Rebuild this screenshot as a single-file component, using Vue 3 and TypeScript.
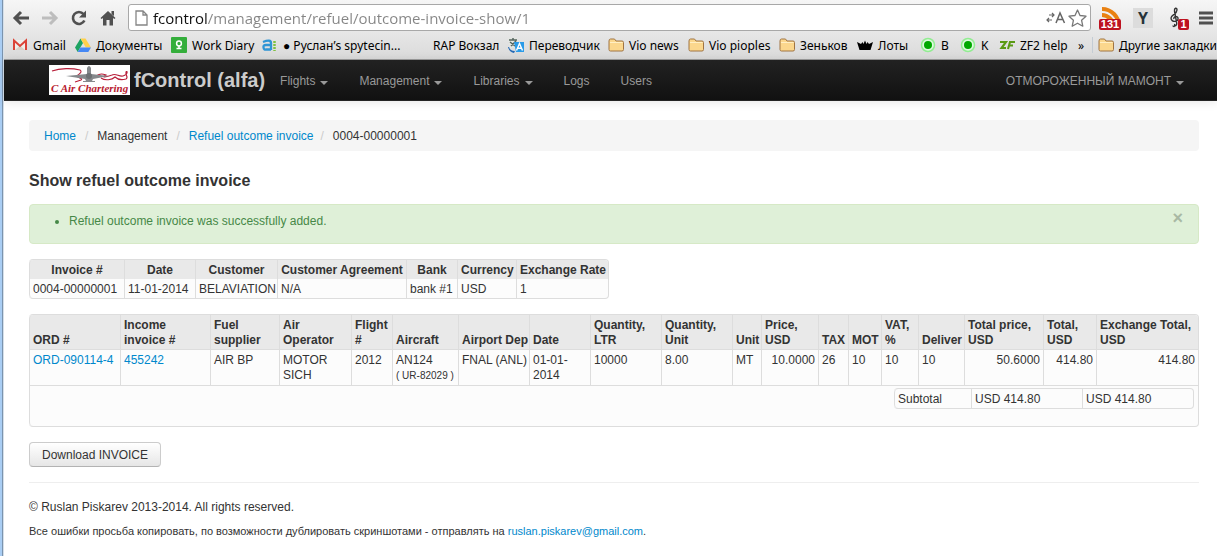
<script setup lang="ts">
interface Bookmark {
  icon: string
  label: string
  width: number
}
interface Column {
  label: string
  width: number
}

const url = 'fcontrol/management/refuel/outcome-invoice-show/1'

const bookmarks: Bookmark[] = [
  { icon: 'gmail', label: 'Gmail', width: 63 },
  { icon: 'drive', label: 'Документы', width: 96 },
  { icon: 'diary', label: 'Work Diary', width: 91 },
  { icon: 'ai', label: '● Руслан’s spytecin...', width: 150 },
  { icon: 'blank', label: 'RAP Вокзал', width: 96 },
  { icon: 'translate', label: 'Переводчик', width: 100 },
  { icon: 'folder', label: 'Vio news', width: 80 },
  { icon: 'folder', label: 'Vio pioples', width: 91 },
  { icon: 'folder', label: 'Зеньков', width: 78 },
  { icon: 'crown', label: 'Лоты', width: 63 },
  { icon: 'dot', label: 'B', width: 40 },
  { icon: 'dot', label: 'K', width: 39 },
  { icon: 'zf', label: 'ZF2 help', width: 77 },
]

const menu = [
  { label: 'Flights', caret: true },
  { label: 'Management', caret: true },
  { label: 'Libraries', caret: true },
  { label: 'Logs', caret: false },
  { label: 'Users', caret: false },
]

const invoiceColumns: Column[] = [
  { label: 'Invoice #', width: 95 },
  { label: 'Date', width: 71 },
  { label: 'Customer', width: 82 },
  { label: 'Customer Agreement', width: 129 },
  { label: 'Bank', width: 51 },
  { label: 'Currency', width: 59 },
  { label: 'Exchange Rate', width: 92 },
]
const invoice = ['0004-00000001', '11-01-2014', 'BELAVIATION', 'N/A', 'bank #1', 'USD', '1']

const orderColumns: Column[] = [
  { label: 'ORD #', width: 91 },
  { label: 'Income\ninvoice #', width: 90 },
  { label: 'Fuel\nsupplier', width: 69 },
  { label: 'Air\nOperator', width: 72 },
  { label: 'Flight\n#', width: 41 },
  { label: 'Aircraft', width: 66 },
  { label: 'Airport Dep', width: 71 },
  { label: 'Date', width: 61 },
  { label: 'Quantity,\nLTR', width: 71 },
  { label: 'Quantity,\nUnit', width: 71 },
  { label: 'Unit', width: 29 },
  { label: 'Price,\nUSD', width: 57 },
  { label: 'TAX', width: 30 },
  { label: 'MOT', width: 33 },
  { label: 'VAT,\n%', width: 37 },
  { label: 'Deliver', width: 46 },
  { label: 'Total price,\nUSD', width: 79 },
  { label: 'Total,\nUSD', width: 53 },
  { label: 'Exchange Total,\nUSD', width: 102 },
]
const subtotalColumns = [77, 111, 111]
</script>

<template>
  <div class="window">
    <header class="chrome">
      <div class="toolbar">
        <button class="tool" type="button" aria-label="Back">
          <svg width="18" height="16" viewBox="0 0 18 16"><path d="M9 2 3 8l6 6M3 8h14" fill="none" stroke="#505050" stroke-width="3" /></svg>
        </button>
        <button class="tool" type="button" aria-label="Forward">
          <svg width="18" height="16" viewBox="0 0 18 16"><path d="M9 2l6 6-6 6M15 8H1" fill="none" stroke="#bdbdbd" stroke-width="3" /></svg>
        </button>
        <button class="tool" type="button" aria-label="Reload">
          <svg width="18" height="16" viewBox="0 0 18 16"><path d="M13.5 4A6 6 0 1 0 14.4 10.5" fill="none" stroke="#505050" stroke-width="2.6" /><path d="M16 .5v7H9z" fill="#505050" /></svg>
        </button>
        <button class="tool" type="button" aria-label="Home page">
          <svg width="18" height="16" viewBox="0 0 18 16"><path d="M1.5 8 9 1l7.5 7-1.2 1L14 8v7.500h-3.500V10h-3v5.500H4V8L2.700 9zM12.500 1H15v5l-2.500-2z" fill="#505050" /></svg>
        </button>
        <div class="omnibox">
          <svg class="page" width="13" height="16" viewBox="0 0 13 16"><path d="M1 1h7l4 4v10H1zM8 1v4h4" fill="#fff" stroke="#858585" stroke-width="1.3" /></svg>
          <input class="address" type="text" aria-label="Address" :value="url" />
          <button class="mini" type="button" aria-label="Translate page">
            <svg width="20" height="16" viewBox="0 0 20 16"><path d="M3 5h5M6 3l2 2-2 2M6 10H1M3 8l-2 2 2 2" fill="none" stroke="#666" stroke-width="1.2" /><path d="m10 13 4-10 4.500 10M11.500 9.500h5.500" fill="none" stroke="#666" stroke-width="1.5" /></svg>
          </button>
          <button class="mini" type="button" aria-label="Bookmark this page">
            <svg width="19" height="18" viewBox="0 0 19 18"><path d="m9.500 1 2.500 5.500 6 .7-4.400 4.100 1.200 5.900-5.300-3-5.300 3 1.200-5.900L1 7.200l6-.7z" fill="#fff" stroke="#777" stroke-width="1.3" stroke-linejoin="round" /></svg>
          </button>
        </div>
        <div class="extensions">
          <button class="tool ext" type="button" aria-label="Feed reader, 131 unread">
            <svg width="24" height="24" viewBox="0 0 24 24"><path d="M3 3a17 17 0 0 1 17 17M3 9a11 11 0 0 1 11 11" fill="none" stroke="#e98112" stroke-width="4" /><circle cx="5" cy="16" r="3" fill="#e98112" /></svg>
            <span class="badge">131</span>
          </button>
          <button class="tool ext letter" type="button" aria-label="Y">Y</button>
          <button class="tool ext" type="button" aria-label="Music, 1 new">
            <svg width="24" height="24" viewBox="0 0 24 24"><path d="M9 20c3 0 3-2 2.500-4L9.500 5C9 2 12 1 12 4c0 4-6 5-6 8 0 5 8 4 7 0-1-3-5-1-4 1M8 19.500a1 1 0 1 0 1-1" fill="none" stroke="#333" stroke-width="1.4" /></svg>
            <span class="badge one">1</span>
          </button>
          <button class="tool bars" type="button" aria-label="Browser menu">
            <svg width="14" height="14" viewBox="0 0 14 14"><path d="M0 2h14M0 7h14M0 12h14" stroke="#505050" stroke-width="3" /></svg>
          </button>
        </div>
      </div>

      <nav class="bookmarks" aria-label="Bookmarks">
        <a v-for="(mark, i) in bookmarks" :key="i" class="bookmark" href="#" :style="{ width: mark.width + 'px' }">
          <svg class="favicon" width="16" height="16" viewBox="0 0 16 16" aria-hidden="true">
            <g v-if="mark.icon === 'gmail'">
              <path d="M1 3h14v10H1z" fill="#efefeb" /><path d="m3 13 5-4.500L13 13z" fill="#d8d3c7" />
              <path d="M2 13V3.500L8 9l6-5.500V13" fill="none" stroke="#db4437" stroke-width="2" />
            </g>
            <g v-else-if="mark.icon === 'drive'">
              <path d="M5.500 1.500 0 10.500l2.700 4.500L8 6z" fill="#1da362" /><path d="M5.500 1.500h5L16 10.500h-5.200z" fill="#ffd04b" /><path d="M5.400 10.500H16L13.300 15H2.700z" fill="#4688f4" />
            </g>
            <g v-else-if="mark.icon === 'diary'">
              <rect width="16" height="16" rx="1" fill="#34ae3b" /><circle cx="8" cy="6.500" r="2.400" fill="none" stroke="#fff" stroke-width="1.5" /><path d="M5.500 11.500h5M8 9v2" stroke="#fff" stroke-width="1.5" />
            </g>
            <g v-else-if="mark.icon === 'ai'">
              <path d="M1 5q8-3 8 1v7M9 8H4q-3 0-2.500 2.500T4 12.500h5" fill="none" stroke="#2f95d5" stroke-width="2.3" /><path d="M12.500 4v10" stroke="#7fc241" stroke-width="2.5" stroke-dasharray="2 1" />
            </g>
            <g v-else-if="mark.icon === 'translate'">
              <path d="M0 1h9l2 10H2z" fill="#e4e6e2" /><path d="M1 3h8M5 1v2M2 5l5 4M8 4 3 9" stroke="#54645e" stroke-width="1.5" /><path d="M6 5h10v10H8z" fill="#2a9be8" /><path d="M1 10q1 4 6 4l-1 2q-5-1-6-6" fill="#2368b5" /><path d="m8.500 13.500 3-7 3 7M9.500 11.300h4" fill="none" stroke="#fff" stroke-width="1.4" />
            </g>
            <g v-else-if="mark.icon === 'folder'">
              <path d="M1 4q0-2 1.500-2h4L8 4h6q1.500 0 1.500 1.500v7q0 1.500-1.500 1.500H2.500Q1 14 1 12.500z" fill="#fbd78d" stroke="#a07443" /><path d="M2 5.500h12.500" stroke="#ffefc4" />
            </g>
            <g v-else-if="mark.icon === 'crown'">
              <path d="m0 5 4 2 1.500-2 1 2L8 3.500 9.500 7l1-2L12 7l4-2-2.500 8h-11z" fill="#000" />
            </g>
            <g v-else-if="mark.icon === 'dot'">
              <circle cx="8" cy="8" r="6.500" fill="#dff9df" stroke="#92ec92" stroke-width="1.5" /><circle cx="8" cy="8" r="4" fill="#00a800" />
            </g>
            <g v-else-if="mark.icon === 'zf'">
              <path d="M1 5h6l-4.500 6H7M9 12l2-7h5M10 8.500h4" fill="none" stroke="#5a9a14" stroke-width="2.1" />
            </g>
          </svg>
          <span>{{ mark.label }}</span>
        </a>
        <button class="more" type="button" aria-label="More bookmarks">»</button>
        <a class="bookmark other" href="#">
          <svg class="favicon" width="16" height="16" viewBox="0 0 16 16" aria-hidden="true">
            <path d="M1 4q0-2 1.500-2h4L8 4h6q1.500 0 1.500 1.500v7q0 1.500-1.500 1.500H2.500Q1 14 1 12.500z" fill="#fbd78d" stroke="#a07443" /><path d="M2 5.500h12.500" stroke="#ffefc4" />
          </svg>
          <span>Другие закладки</span>
        </a>
      </nav>
    </header>

    <nav class="navbar" aria-label="Main">
      <a class="brand" href="#">
        <svg class="logo" width="81" height="30" viewBox="0 0 81 30" aria-label="C Air Chartering">
          <rect width="81" height="30" fill="#fff" />
          <path d="M3 6c8-3 20-3 28-1 3 2-1 4-2 5-3 3 6 3 3 5l-6 2M47 11c5-3 7-2 10-1-6 3 1 2 6 0 4-2 7 2 11 1 6-2 4-6 3-4-1 3 3 5 0 7-4 1-8 1-11-2-3 3-10 4-14 1" fill="none" stroke="#b81f3a" stroke-width="1.1" />
          <path d="M38 3q2-4 4 0v6l18 2-16 3-1 2h3v1H34v-1h3l-1-2-19-3 21-2z" fill="#85898c" /><circle cx="40" cy="11" r="3" fill="#6c7073" />
          <text x="2" y="27" font-family="Liberation Serif, serif" font-size="11" font-style="italic" fill="#b8202f">C Air Chartering</text>
        </svg>
        <span>fControl (alfa)</span>
      </a>
      <ul class="menu">
        <li v-for="item in menu" :key="item.label">
          <a href="#">{{ item.label }}<i v-if="item.caret" class="caret"></i></a>
        </li>
      </ul>
      <a class="account" href="#">ОТМОРОЖЕННЫЙ МАМОНТ<i class="caret"></i></a>
    </nav>

    <main class="content">
      <ol class="breadcrumb">
        <li><a href="#">Home</a><span class="divider">/</span></li>
        <li>Management<span class="divider">/</span></li>
        <li><a href="#">Refuel outcome invoice</a><span class="divider tight">/</span></li>
        <li>0004-00000001</li>
      </ol>

      <h1>Show refuel outcome invoice</h1>

      <div class="alert" role="status">
        <ul><li>Refuel outcome invoice was successfully added.</li></ul>
        <button class="close" type="button" aria-label="Close">×</button>
      </div>

      <table class="grid invoice">
        <colgroup><col v-for="c in invoiceColumns" :key="c.label" :style="{ width: c.width + 'px' }" /></colgroup>
        <thead>
          <tr><th v-for="c in invoiceColumns" :key="c.label" scope="col">{{ c.label }}</th></tr>
        </thead>
        <tbody>
          <tr><td v-for="value in invoice" :key="value">{{ value }}</td></tr>
        </tbody>
      </table>

      <table class="grid orders">
        <colgroup><col v-for="c in orderColumns" :key="c.label" :style="{ width: c.width + 'px' }" /></colgroup>
        <thead>
          <tr><th v-for="c in orderColumns" :key="c.label" scope="col">{{ c.label }}</th></tr>
        </thead>
        <tbody>
          <tr class="order">
            <td><a href="#">ORD-090114-4</a></td>
            <td><a href="#">455242</a></td>
            <td>AIR BP</td>
            <td>MOTOR<br />SICH</td>
            <td>2012</td>
            <td>AN124<br /><small>( UR-82029 )</small></td>
            <td>FNAL (ANL)</td>
            <td>01-01-<br />2014</td>
            <td>10000</td>
            <td>8.00</td>
            <td>MT</td>
            <td class="num">10.0000</td>
            <td>26</td>
            <td>10</td>
            <td>10</td>
            <td>10</td>
            <td class="num">50.6000</td>
            <td class="num">414.80</td>
            <td class="num">414.80</td>
          </tr>
          <tr class="sum">
            <td :colspan="orderColumns.length">
              <table class="grid subtotal">
                <colgroup><col v-for="(w, i) in subtotalColumns" :key="i" :style="{ width: w + 'px' }" /></colgroup>
                <tbody>
                  <tr><td>Subtotal</td><td>USD 414.80</td><td>USD 414.80</td></tr>
                </tbody>
              </table>
            </td>
          </tr>
        </tbody>
      </table>

      <button class="download" type="button">Download INVOICE</button>

      <footer>
        <p>© Ruslan Piskarev 2013-2014. All rights reserved.</p>
        <p class="note">Все ошибки просьба копировать, по возможности дублировать скриншотами - отправлять на <a href="#">ruslan.piskarev@gmail.com</a>.</p>
      </footer>
    </main>
  </div>
</template>

<style>
body {
  margin: 0;
  background: #fff;
}
</style>

<style scoped>
* {
  box-sizing: border-box;
}
.window {
  min-height: 100vh;
  padding-left: 4px;
  background: linear-gradient(90deg, #a9cdf3 0 2px, #7b93ad 2px 3px, #d5e0ea 3px 4px, #fff 4px);
  overflow: hidden;
  font: 12px/15px "Liberation Sans", Arial, sans-serif;
  color: #333;
}
a {
  color: #08c;
  text-decoration: none;
}
button {
  font: inherit;
  cursor: pointer;
}
ul,
ol {
  margin: 0;
  padding: 0;
  list-style: none;
}

.chrome {
  height: 60px;
  border-bottom: 1px solid #9c9c9c;
  background: linear-gradient(#f6f6f6, #dadada);
  font-family: "Noto Sans", "Open Sans", sans-serif;
  color: #000;
}
.toolbar {
  display: flex;
  align-items: center;
  height: 35px;
  padding: 0 4px 0 8px;
}
.tool {
  display: flex;
  justify-content: center;
  align-items: center;
  flex: none;
  width: 29px;
  height: 24px;
  padding: 0 11px 0 0;
  border: 0;
  background: none;
}
.tool svg,
.mini svg,
.page {
  flex: none;
}
.omnibox {
  display: flex;
  align-items: center;
  flex: 1;
  min-width: 0;
  height: 27px;
  padding: 0 3px 0 6px;
  border: 1px solid #a8a8a8;
  border-radius: 3px;
  background: #fff;
}
.address {
  flex: 1;
  min-width: 0;
  height: 24px;
  margin: 0 0 0 5px;
  padding: 0;
  border: 0;
  outline: 0;
  font: 15px/24px "Open Sans", "Noto Sans", sans-serif;
  color: transparent;
  background: linear-gradient(90deg, #111 55px, #858585 55px);
  background-clip: text;
}
.mini {
  display: flex;
  margin: 0 0 0 2px;
  padding: 0;
  border: 0;
  background: none;
}
.extensions {
  display: flex;
  align-items: center;
  gap: 10px;
  margin-left: 8px;
}
.ext {
  position: relative;
  width: 24px;
  padding: 0;
}
.badge {
  position: absolute;
  left: 0;
  bottom: 0;
  width: 22px;
  border-radius: 2px;
  background: #bd1220;
  color: #fff;
  font: bold 11px/11px "Liberation Sans", Arial, sans-serif;
}
.badge.one {
  left: 13px;
  width: 11px;
}
.letter {
  width: 20px;
  height: 20px;
  margin: 0 2px 0 0;
  background: #dcdcdc;
  color: #263238;
  font: bold 16px/20px "Open Sans", sans-serif;
}
.bars {
  width: 14px;
  padding: 0;
}
.bookmarks {
  display: flex;
  align-items: center;
  height: 20px;
  padding-left: 8px;
}
.bookmark {
  display: flex;
  align-items: center;
  gap: 5px;
  flex: none;
  color: #000;
  font-size: 12px;
  white-space: nowrap;
}
.favicon {
  flex: none;
}
.more {
  width: 17px;
  padding: 0 6px 0 0;
  border: 0;
  background: none;
}
.other {
  padding-left: 5px;
  border-left: 1px solid #c4ccd4;
}

.navbar {
  display: flex;
  align-items: center;
  height: 41px;
  padding: 0 29px 0 45px;
  border-bottom: 1px solid #252525;
  background: linear-gradient(#222, #111);
  box-shadow: 0 1px 10px rgba(0, 0, 0, 0.1);
}
.brand {
  display: flex;
  align-items: center;
  gap: 4px;
  color: #ccc;
  font-size: 20px;
  font-weight: bold;
  line-height: 20px;
  white-space: nowrap;
}
.menu {
  display: flex;
}
.menu a,
.account {
  display: flex;
  align-items: center;
  padding: 2px 16px 0 15px;
  color: #999;
  line-height: 20px;
  white-space: nowrap;
}
.account {
  margin-left: auto;
  padding: 2px 4px 0;
}
.caret {
  margin: 4px 0 0 5px;
  border: 4px solid transparent;
  border-top-color: #999;
  border-bottom: 0;
}

.content {
  padding: 19px 18px 0 25px;
}
.breadcrumb {
  display: flex;
  padding: 9px 15px 7px;
  border-radius: 4px;
  background: #f5f5f5;
}
.divider {
  padding: 0 9px;
  color: #ccc;
}
.tight {
  padding-left: 7px;
}
h1 {
  margin: 20px 0 13px;
  font-size: 16px;
  line-height: 20px;
}
.alert {
  display: flex;
  justify-content: space-between;
  align-items: flex-start;
  height: 40px;
  margin-bottom: 15px;
  padding: 8px 15px 0 39px;
  border: 1px solid #d6e9c6;
  border-radius: 4px;
  background: #dff0d8;
  color: #468847;
}
.alert ul {
  padding-top: 1px;
  list-style: disc;
}
.close {
  padding: 0;
  border: 0;
  background: none;
  color: #a9b9a4;
  font-size: 18px;
  font-weight: bold;
  line-height: 10px;
}

.grid {
  table-layout: fixed;
  margin-bottom: 15px;
  border: 1px solid #ddd;
  border-left: 0;
  border-collapse: separate;
  border-spacing: 0;
  border-radius: 4px;
  background: #fcfcfc;
  overflow: hidden;
}
.grid th,
.grid td {
  padding: 3px 0 1px 3px;
  border-left: 1px solid #ddd;
  text-align: left;
  vertical-align: top;
  white-space: pre;
}
.grid th {
  background: #e9e9e9;
  vertical-align: bottom;
}
.grid tr:first-child > :first-child {
  border-top-left-radius: 4px;
}
.grid tbody tr:last-child > :first-child {
  border-bottom-left-radius: 4px;
}
.grid thead + tbody > tr:first-child > :first-child {
  border-top-left-radius: 0;
}
.invoice {
  width: 580px;
}
.invoice th {
  padding-right: 3px;
  text-align: center;
}
.orders {
  width: 100%;
}
.orders > tbody > tr > td {
  border-top: 1px solid #ddd;
}
.orders .order {
  height: 36px;
}
.orders .num {
  padding-right: 3px;
  text-align: right;
}
.orders .sum > td {
  padding: 2px 0;
}
.subtotal {
  width: 300px;
  margin-left: auto;
  margin-right: 4px;
}
small {
  font-size: 10px;
}
.download {
  height: 25px;
  padding: 1px 12px 0;
  border: 1px solid #ccc;
  border-bottom-color: #b3b3b3;
  border-radius: 4px;
  background: linear-gradient(#fff, #e6e6e6);
  color: #333;
}
footer {
  margin-top: 15px;
  padding-top: 17px;
  border-top: 1px solid #eee;
}
footer p {
  margin: 0 0 9px;
}
.note {
  font-size: 11px;
}
</style>
